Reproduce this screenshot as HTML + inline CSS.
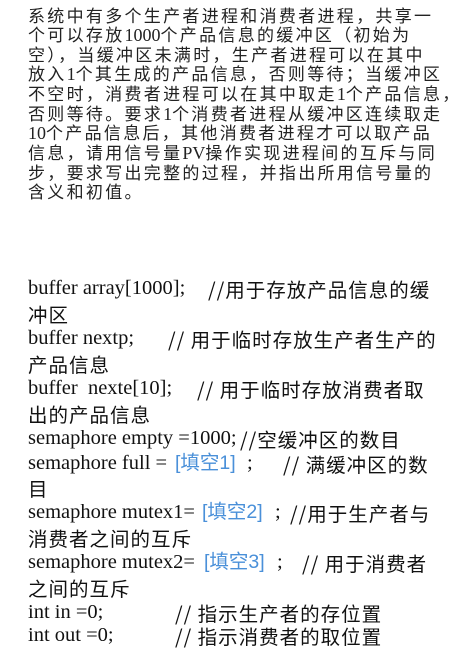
<!DOCTYPE html>
<html><head><meta charset="utf-8"><style>
html,body{margin:0;padding:0;background:#fff;width:452px;height:658px;overflow:hidden}
.p{position:absolute;left:28px;top:6px;font-family:"Noto Sans CJK SC",sans-serif;font-size:17px;letter-spacing:2.3px;line-height:18.9px;color:#222;white-space:nowrap}
.p i{font-style:normal;font-family:"Liberation Serif",serif;letter-spacing:0;font-size:18px}
.l{position:absolute;left:28px;height:25px;line-height:25px;font-family:"Liberation Serif","Noto Sans CJK SC",sans-serif;font-size:20.5px;color:#111;white-space:nowrap}
.c{position:absolute;top:0;font-family:"Noto Sans CJK SC",sans-serif;font-size:19.5px;letter-spacing:1px}
.cj{font-family:"Noto Sans CJK SC",sans-serif;font-size:19.5px;letter-spacing:1px}
.b{position:absolute;top:0;color:#4a90d9;font-family:"Liberation Sans","Noto Sans CJK SC",sans-serif;font-size:19.5px}
</style></head><body>
<div class="p">系统中有多个生产者进程和消费者进程，共享一<br>个可以存放<i>1000</i>个产品信息的缓冲区（初始为<br>空），当缓冲区未满时，生产者进程可以在其中<br>放入<i>1</i>个其生成的产品信息，否则等待；当缓冲区<br>不空时，消费者进程可以在其中取走<i>1</i>个产品信息，<br>否则等待。要求<i>1</i>个消费者进程从缓冲区连续取走<br><i>10</i>个产品信息后，其他消费者进程才可以取产品<br>信息，请用信号量<i>PV</i>操作实现进程间的互斥与同<br>步，要求写出完整的过程，并指出所用信号量的<br>含义和初值。</div>

<div class="l" style="top:276px">buffer array[1000];<span class="c" style="left:180px">//用于存放产品信息的缓</span></div>
<div class="l cj" style="top:301px">冲区</div>
<div class="l" style="top:326px">buffer nextp;<span class="c" style="left:140px">// 用于临时存放生产者生产的</span></div>
<div class="l cj" style="top:351px">产品信息</div>
<div class="l" style="top:376px">buffer&nbsp; nexte[10];<span class="c" style="left:169px">// 用于临时存放消费者取</span></div>
<div class="l cj" style="top:401px">出的产品信息</div>
<div class="l" style="top:426px">semaphore empty =1000;<span class="c" style="left:212px">//空缓冲区的数目</span></div>
<div class="l" style="top:451px">semaphore full = <span class="b" style="left:147px">[填空1]</span><span style="position:absolute;left:219px">;</span><span class="c" style="left:255px">// 满缓冲区的数</span></div>
<div class="l cj" style="top:475px">目</div>
<div class="l" style="top:500px">semaphore mutex1=<span class="b" style="left:174px">[填空2]</span><span style="position:absolute;left:247px">;</span><span class="c" style="left:262px">//用于生产者与</span></div>
<div class="l cj" style="top:525px">消费者之间的互斥</div>
<div class="l" style="top:550px">semaphore mutex2=<span class="b" style="left:176px">[填空3]</span><span style="position:absolute;left:249px">;</span><span class="c" style="left:274px">// 用于消费者</span></div>
<div class="l cj" style="top:575px">之间的互斥</div>
<div class="l" style="top:600px">int in =0;<span class="c" style="left:147px">// 指示生产者的存位置</span></div>
<div class="l" style="top:623px">int out =0;<span class="c" style="left:147px">// 指示消费者的取位置</span></div>
</body></html>
